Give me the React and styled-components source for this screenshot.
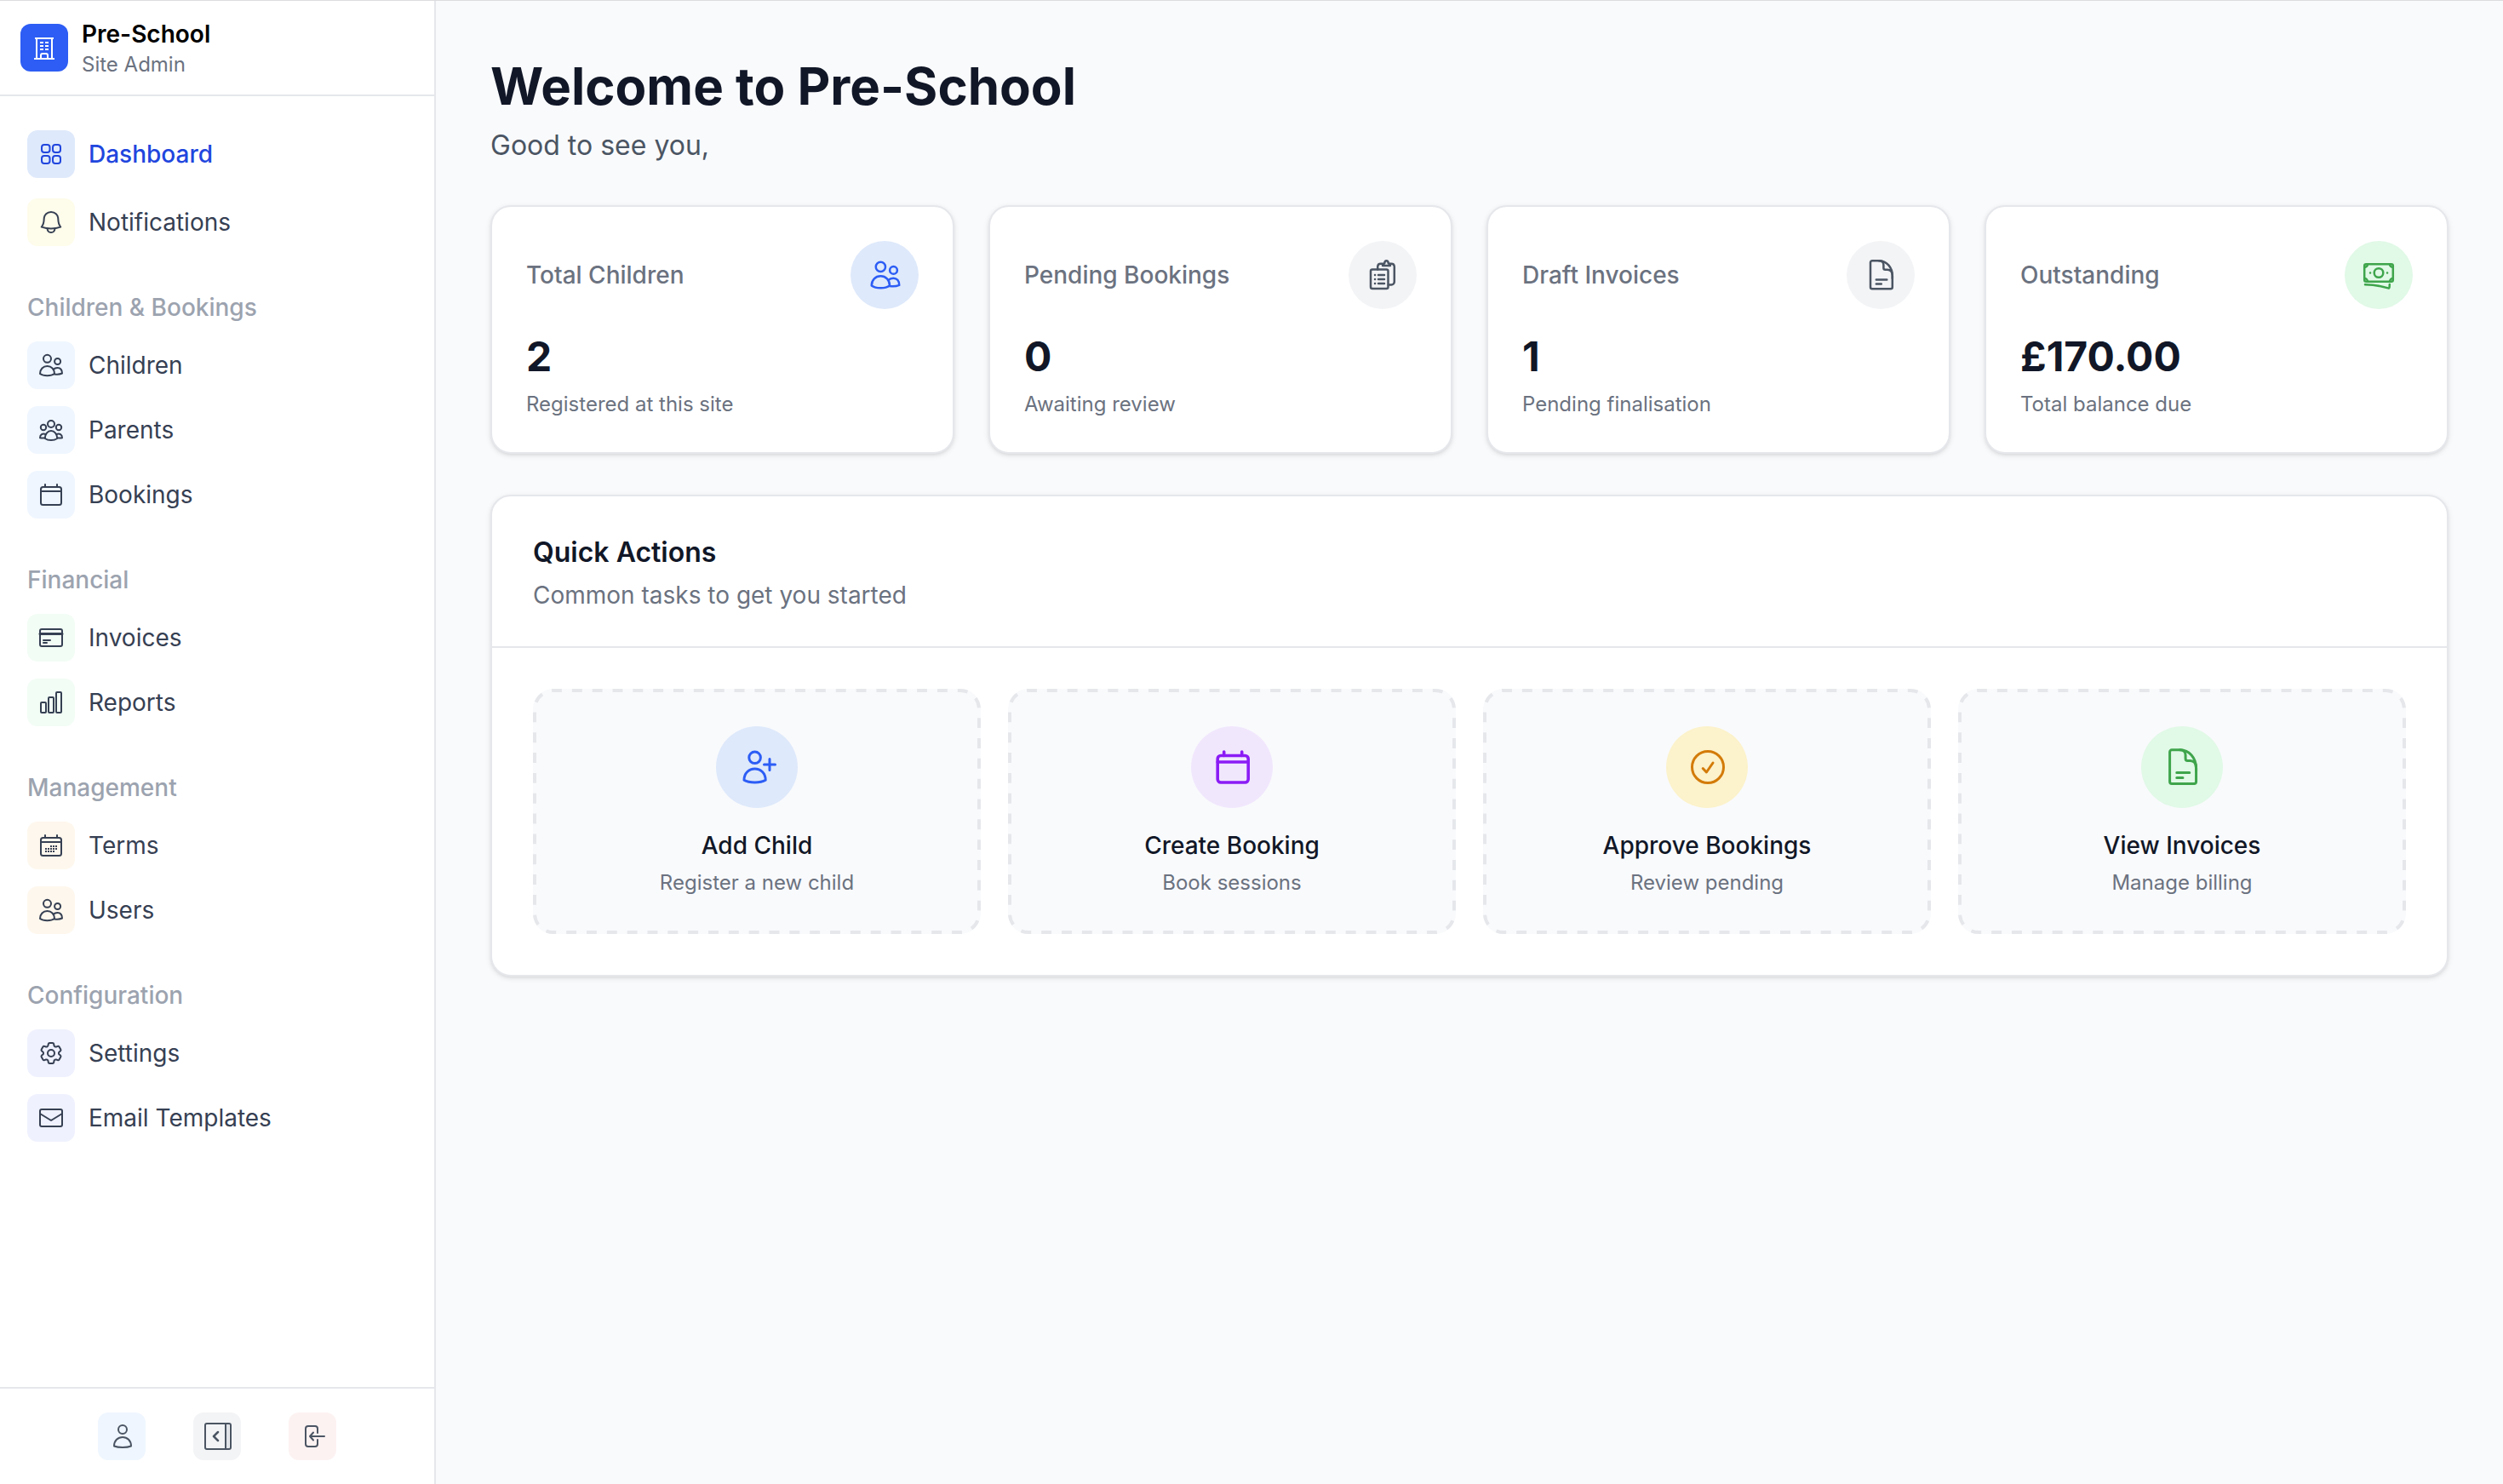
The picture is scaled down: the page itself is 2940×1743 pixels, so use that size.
import React from 'react'
import styled, { createGlobalStyle } from 'styled-components'
import { HiOutlineCog6Tooth } from 'react-icons/hi2'

const GlobalStyle = createGlobalStyle`
  * {
    box-sizing: border-box;
  }

  body {
    margin: 0;
    background: #f9fafc;
    color: #111727;
    font-family: Inter, 'Liberation Sans', sans-serif;
    font-size: 28px;
    line-height: 40px;
  }

  h1, h2, h3, p, ul {
    margin: 0;
    padding: 0;
  }

  a {
    color: inherit;
    text-decoration: none;
  }
`

const Layout = styled.div`
  display: flex;
  min-height: 100vh;
  border-top: 1px solid #dcdcdf;
`

const Sidebar = styled.aside`
  display: flex;
  flex-direction: column;
  flex: 0 0 512px;
  background: #fff;
  border-right: 2px solid #e5e7eb;
`

const Brand = styled.header`
  display: flex;
  align-items: center;
  gap: 16px;
  height: 112px;
  padding: 0 24px;
  border-bottom: 2px solid #e5e7eb;
`

const BrandText = styled.div`
  padding-top: 4px;
  line-height: 36px;
`

const BrandName = styled.div`
  color: #000;
  font-weight: 600;
`

const BrandRole = styled.div`
  color: #6b7280;
  font-size: 24px;
`

const Tile = styled.span`
  display: flex;
  align-items: center;
  justify-content: center;
  flex: none;
  width: 56px;
  height: 56px;
  border-radius: 12px;
  background: ${p => p.$bg};
  color: ${p => p.$color || 'inherit'};
`

const Nav = styled.nav`
  flex: 1;
  padding: 40px 32px;
`

const NavList = styled.ul`
  display: flex;
  flex-direction: column;
  gap: ${p => (p.$loose ? '24px' : '20px')};
  list-style: none;
`

const NavLink = styled.a`
  display: flex;
  align-items: center;
  gap: 16px;
  color: ${p => (p.$active ? '#2146de' : '#364053')};
  font-weight: ${p => (p.$active ? 500 : 400)};
`

const NavHeading = styled.h3`
  margin: 52px 0 20px;
  color: #9ca3af;
  font-size: 28px;
  font-weight: 500;
`

const SidebarFooter = styled.footer`
  display: flex;
  justify-content: center;
  gap: 56px;
  padding: 28px;
  border-top: 2px solid #e5e7eb;
`

const FooterButton = styled.button`
  display: flex;
  align-items: center;
  justify-content: center;
  width: 56px;
  height: 56px;
  padding: 0;
  border: 0;
  border-radius: 12px;
  background: ${p => p.$bg};
  color: #4b5563;
`

const Main = styled.main`
  flex: 1;
  min-width: 0;
  padding: 64px;
`

const PageTitle = styled.h1`
  font-size: 60px;
  font-weight: 700;
  line-height: 72px;
`

const PageSubtitle = styled.p`
  margin-top: 8px;
  color: #4b5563;
  font-size: 32px;
  line-height: 52px;
`

const Stats = styled.section`
  display: grid;
  grid-template-columns: repeat(4, 1fr);
  gap: 40px;
  margin: 44px 0 48px;
`

const Card = styled.div`
  background: #fff;
  border: 2px solid #e5e7eb;
  border-radius: 24px;
  box-shadow: 0 2px 6px rgba(0, 0, 0, 0.1), 0 2px 4px -2px rgba(0, 0, 0, 0.1);
`

const StatCard = styled(Card)`
  padding: 40px;
`

const StatHeader = styled.div`
  display: flex;
  align-items: center;
  justify-content: space-between;
  margin-bottom: 24px;
  color: #6b7280;
  font-weight: 500;
`

const Circle = styled.span`
  display: flex;
  align-items: center;
  justify-content: center;
  width: ${p => p.$size}px;
  height: ${p => p.$size}px;
  border-radius: 50%;
  background: ${p => p.$bg};
  color: ${p => p.$color};
`

const StatValue = styled.div`
  margin-bottom: 8px;
  font-size: 48px;
  font-weight: 700;
  line-height: 64px;
`

const Hint = styled.div`
  color: #6b7280;
  font-size: 24px;
  line-height: 32px;
`

const PanelHeader = styled.div`
  padding: 48px 48px 40px;
  border-bottom: 2px solid #e5e7eb;
`

const PanelTitle = styled.h2`
  margin-bottom: 12px;
  font-size: 32px;
  font-weight: 600;
  line-height: 36px;
`

const PanelText = styled.p`
  color: #6b7280;
`

const Actions = styled.div`
  display: grid;
  grid-template-columns: repeat(4, 1fr);
  gap: 32px;
  padding: 48px;
`

const Action = styled.a`
  position: relative;
  display: flex;
  flex-direction: column;
  align-items: center;
  padding: 44px;
  border-radius: 24px;
  background: #f9fafc;
`

const DashedOutline = styled.svg`
  position: absolute;
  inset: 0;
  width: 100%;
  height: 100%;
  fill: none;
  stroke: #e5e7eb;
  stroke-width: 4px;

  rect {
    x: 2px;
    y: 2px;
    width: calc(100% - 4px);
    height: calc(100% - 4px);
  }
`

const ActionTitle = styled.div`
  margin: 24px 0 8px;
  font-weight: 500;
`

const Svg = ({ size = 32, box = 32, stroke = 2, left = 0, children }) => (
  <svg
    width={size}
    height={size}
    viewBox={`${left} 0 ${box} ${box}`}
    fill="none"
    stroke="currentColor"
    strokeWidth={stroke}
    strokeLinecap="round"
    strokeLinejoin="round"
    overflow="visible"
    aria-hidden="true"
  >
    {children}
  </svg>
)

const BuildingIcon = () => (
  <Svg>
    <path d="M5 5h22M7 5v24M25 5v24M4 29h24" strokeLinecap="butt" />
    <path d="M11 10h4M17 10h4M11 14h4M17 14h4M11 18h4M17 18h4" strokeLinecap="butt" />
    <path d="M12 29v-4a2 2 0 0 1 2-2h4a2 2 0 0 1 2 2v4" />
  </Svg>
)

const GridIcon = () => (
  <Svg>
    <rect x="5" y="5" width="9.5" height="9" rx="3" />
    <rect x="18" y="5" width="9" height="9" rx="3" />
    <rect x="5" y="18" width="9.5" height="9" rx="3" />
    <rect x="18" y="18" width="9" height="9" rx="3" />
  </Svg>
)

const BellIcon = () => (
  <Svg>
    <path d="M16 4c-4.700 0-8.200 3.400-8.300 8-.1 4.400-.9 7.200-2.900 9.600 3.600 1.200 7.200 1.800 11.200 1.800s7.600-.6 11.200-1.800c-2-2.400-2.800-5.200-2.900-9.600C24.200 7.400 20.700 4 16 4z" />
    <path d="M11.500 23.500c.3 2.800 2 4.500 4.500 4.500s4.200-1.700 4.500-4.500" />
  </Svg>
)

const ChildrenIcon = ({ size, left }) => (
  <Svg size={size} left={left}>
    <circle cx="11.500" cy="8.300" r="4.500" />
    <circle cx="23.600" cy="11.500" r="3.500" />
    <path d="M11.500 17C6.700 17 3 20.500 3 26c4 3 13 3 17 0 0-5.500-3.700-9-8.500-9z" />
    <path d="M18.800 20.800c1.200-1.200 2.800-1.900 4.600-1.900 3.400 0 5.600 2.500 5.600 6.600-2.500 1.100-6 1.400-9 .9" />
  </Svg>
)

const ParentsIcon = () => (
  <Svg>
    <circle cx="16" cy="9" r="4" />
    <circle cx="7" cy="13" r="3.200" />
    <circle cx="25" cy="13" r="3.200" />
    <path d="M16 17c-4 0-7.200 4-7.200 9 4 2.700 10.400 2.700 14.400 0 0-5-3.200-9-7.200-9z" />
    <path d="M9.500 21C6 19.600 3 21.500 3 25.200c1.500.3 3.500.3 5.500 0M22.500 21c3.500-1.400 6.500.5 6.500 4.200-1.500.3-3.500.3-5.500 0" />
  </Svg>
)

const CalendarIcon = ({ size, stroke, left, dots }) => (
  <Svg size={size} stroke={stroke} left={left}>
    <rect x="4" y="7" width="24" height="21" rx="2.500" />
    <path d="M4 12h24M9 4v3M23 4v3" />
    {dots && (
      <path
        d="M15 17h2M18 17h2M21 17h2M9 20h2M12 20h2M15 20h2M18 20h2M21 20h2M9 23h2M12 23h2M15 23h2M18 23h2"
        strokeLinecap="butt"
      />
    )}
  </Svg>
)

const CreditCardIcon = () => (
  <Svg>
    <rect x="3" y="6" width="26" height="20" rx="2" />
    <path d="M3 11.500h26" strokeWidth="3" />
    <path d="M7 19h8M7 22h4" />
  </Svg>
)

const BarsIcon = () => (
  <Svg>
    <rect x="4" y="16" width="6" height="12" rx="1" />
    <rect x="13" y="10" width="6" height="18" rx="1" />
    <rect x="22" y="4" width="6" height="24" rx="1" />
  </Svg>
)

const MailIcon = () => (
  <Svg>
    <rect x="3" y="6" width="26" height="20" rx="2" />
    <path d="M3 11l12.200 7.500q.8.400 1.600 0L29 11" />
  </Svg>
)

const UserIcon = () => (
  <Svg size={36} box={36}>
    <circle cx="19" cy="10" r="5" />
    <path d="M19 19c-5.500 0-10 4-10 10.500 5 2 15 2 20 0C29 23 24.500 19 19 19z" />
  </Svg>
)

const CollapseIcon = () => (
  <Svg size={36} box={36}>
    <path d="M28 3h4v30h-4z" fill="#dfe2e7" stroke="none" />
    <rect x="4" y="3" width="30" height="30" rx="2" />
    <path d="M28 3v30" />
    <path d="M19 13l-5 5 5 5" strokeWidth="2.500" />
  </Svg>
)

const LogoutIcon = () => (
  <Svg size={36} box={36}>
    <path d="M24 14V9a3 3 0 0 0-3-3h-8a3 3 0 0 0-3 3v18a3 3 0 0 0 3 3h8a3 3 0 0 0 3-3v-5" />
    <path d="M32 18H15M19 13.500L15 18l4 4.500" />
  </Svg>
)

const ClipboardIcon = () => (
  <Svg size={40} box={40} stroke={2.5}>
    <rect x="6" y="13.500" width="20.500" height="22.500" rx="2" />
    <path d="M14.200 13.500V10A3.500 3.500 0 0 1 17.700 6.800h2M29 6.800h1.300A3.500 3.500 0 0 1 33.800 10v18a3.500 3.500 0 0 1-3.500 3.500h-3.500" />
    <path d="M20 9c0-1.600.8-2.500 2.200-2.700.2-2 1-3 2.300-3s2.100 1 2.300 3c1.400.2 2.200 1.100 2.200 2.700z" />
    <path d="M11 20h.1M11 25h.1M11 30h.1M15 20h7M15 25h7M15 30h7" />
  </Svg>
)

const DocumentIcon = ({ size }) => (
  <Svg size={size} box={40} stroke={2.5}>
    <path d="M18 3.200h-8a2 2 0 0 0-2 2v29a2 2 0 0 0 2 2h21.800a2 2 0 0 0 2-2V21C33.800 11 27 3.200 18 3.200z" />
    <path d="M18 3.200c4 0 5.400 2 5.400 5v3.500a2 2 0 0 0 2 2h2.600c3.800 0 5.800 2.300 5.800 7.300v3" />
    <path d="M14.800 25.500h12.500M14.800 30.500h6" />
  </Svg>
)

const CashIcon = () => (
  <Svg size={40} box={40} stroke={2.5}>
    <rect x="3.200" y="7.200" width="33.600" height="20.600" rx="2" />
    <path d="M3.200 11a3.800 3.800 0 0 0 3.800-3.800M33 7.200a3.800 3.800 0 0 0 3.800 3.800M3.200 24A3.800 3.800 0 0 1 7 27.800M33 27.800a3.800 3.800 0 0 1 3.800-3.800" />
    <circle cx="20" cy="17.500" r="5.300" />
    <path d="M10 17.500h.1M30 17.500h.1M4 31.200c9 .1 18 1.500 27 4.200.9.300 1.500-.1 1.600-1l.2-3.400" />
  </Svg>
)

const AddUserIcon = () => (
  <Svg size={48} box={48} stroke={3}>
    <circle cx="21.600" cy="12.800" r="6.800" />
    <path d="M21.600 26C14.800 26 9 31 9 39.200c6 3.600 19.200 3.600 25.200 0C34.200 31 28.400 26 21.600 26z" />
    <path d="M39 14.500v13M32.500 21h13" />
  </Svg>
)

const CheckIcon = () => (
  <Svg size={48} box={48} stroke={3}>
    <circle cx="25" cy="24" r="18.500" />
    <path d="M19.200 25.500l4.200 4.500 7.600-11" />
  </Svg>
)

const mainLinks = [
  { label: 'Dashboard', bg: '#dee9fb', icon: <GridIcon />, active: true },
  { label: 'Notifications', bg: '#fefcea', icon: <BellIcon /> },
]

const navGroups = [
  {
    title: 'Children & Bookings',
    bg: '#eff6ff',
    links: [
      { label: 'Children', icon: <ChildrenIcon /> },
      { label: 'Parents', icon: <ParentsIcon /> },
      { label: 'Bookings', icon: <CalendarIcon /> },
    ],
  },
  {
    title: 'Financial',
    bg: '#f2fdf5',
    links: [
      { label: 'Invoices', icon: <CreditCardIcon /> },
      { label: 'Reports', icon: <BarsIcon /> },
    ],
  },
  {
    title: 'Management',
    bg: '#fef7ed',
    links: [
      { label: 'Terms', icon: <CalendarIcon dots /> },
      { label: 'Users', icon: <ChildrenIcon /> },
    ],
  },
  {
    title: 'Configuration',
    bg: '#eff1fe',
    links: [
      { label: 'Settings', icon: <HiOutlineCog6Tooth size={32} /> },
      { label: 'Email Templates', icon: <MailIcon /> },
    ],
  },
]

const stats = [
  { label: 'Total Children', value: '2', hint: 'Registered at this site', bg: '#dee9fb', color: '#2c5df5', icon: <ChildrenIcon size={40} left={-0.8} /> },
  { label: 'Pending Bookings', value: '0', hint: 'Awaiting review', bg: '#f3f4f6', color: '#4b5563', icon: <ClipboardIcon /> },
  { label: 'Draft Invoices', value: '1', hint: 'Pending finalisation', bg: '#f3f4f6', color: '#4b5563', icon: <DocumentIcon size={40} /> },
  { label: 'Outstanding', value: '£170.00', hint: 'Total balance due', bg: '#e1f9e7', color: '#3fa54c', icon: <CashIcon /> },
]

const actions = [
  { label: 'Add Child', hint: 'Register a new child', bg: '#dee9fb', color: '#2c5df5', icon: <AddUserIcon /> },
  { label: 'Create Booking', hint: 'Book sessions', bg: '#f1e7fd', color: '#8b1cf5', icon: <CalendarIcon size={48} stroke={2.4} left={-0.8} /> },
  { label: 'Approve Bookings', hint: 'Review pending', bg: '#fcf2cb', color: '#d37b09', icon: <CheckIcon /> },
  { label: 'View Invoices', hint: 'Manage billing', bg: '#e1f9e7', color: '#3fa54c', icon: <DocumentIcon size={48} /> },
]

const NavItem = ({ label, bg, icon, active }) => (
  <li>
    <NavLink href="#" $active={active} aria-current={active ? 'page' : undefined}>
      <Tile $bg={bg}>{icon}</Tile>
      {label}
    </NavLink>
  </li>
)

const App = () => (
  <Layout>
    <GlobalStyle />
    <Sidebar>
      <Brand>
        <Tile $bg="#2d5df4" $color="#fff">
          <BuildingIcon />
        </Tile>
        <BrandText>
          <BrandName>Pre-School</BrandName>
          <BrandRole>Site Admin</BrandRole>
        </BrandText>
      </Brand>
      <Nav>
        <NavList $loose>
          {mainLinks.map(link => (
            <NavItem key={link.label} {...link} />
          ))}
        </NavList>
        {navGroups.map(group => (
          <section key={group.title}>
            <NavHeading>{group.title}</NavHeading>
            <NavList>
              {group.links.map(link => (
                <NavItem key={link.label} bg={group.bg} {...link} />
              ))}
            </NavList>
          </section>
        ))}
      </Nav>
      <SidebarFooter>
        <FooterButton type="button" aria-label="Profile" $bg="#eff6ff">
          <UserIcon />
        </FooterButton>
        <FooterButton type="button" aria-label="Collapse sidebar" $bg="#f3f4f6">
          <CollapseIcon />
        </FooterButton>
        <FooterButton type="button" aria-label="Log out" $bg="#fdf2f2">
          <LogoutIcon />
        </FooterButton>
      </SidebarFooter>
    </Sidebar>
    <Main>
      <PageTitle>Welcome to Pre-School</PageTitle>
      <PageSubtitle>Good to see you,</PageSubtitle>
      <Stats>
        {stats.map(stat => (
          <StatCard key={stat.label}>
            <StatHeader>
              {stat.label}
              <Circle $size={80} $bg={stat.bg} $color={stat.color}>
                {stat.icon}
              </Circle>
            </StatHeader>
            <StatValue>{stat.value}</StatValue>
            <Hint>{stat.hint}</Hint>
          </StatCard>
        ))}
      </Stats>
      <Card>
        <PanelHeader>
          <PanelTitle>Quick Actions</PanelTitle>
          <PanelText>Common tasks to get you started</PanelText>
        </PanelHeader>
        <Actions>
          {actions.map(action => (
            <Action key={action.label} href="#">
              {/* 66 even dashes, longer than the ones a dashed border gives */}
              <DashedOutline aria-hidden="true">
                <rect rx="22" pathLength="1584" strokeDasharray="12 12" strokeDashoffset="2" />
              </DashedOutline>
              <Circle $size={96} $bg={action.bg} $color={action.color}>
                {action.icon}
              </Circle>
              <ActionTitle>{action.label}</ActionTitle>
              <Hint>{action.hint}</Hint>
            </Action>
          ))}
        </Actions>
      </Card>
    </Main>
  </Layout>
)

export default App
